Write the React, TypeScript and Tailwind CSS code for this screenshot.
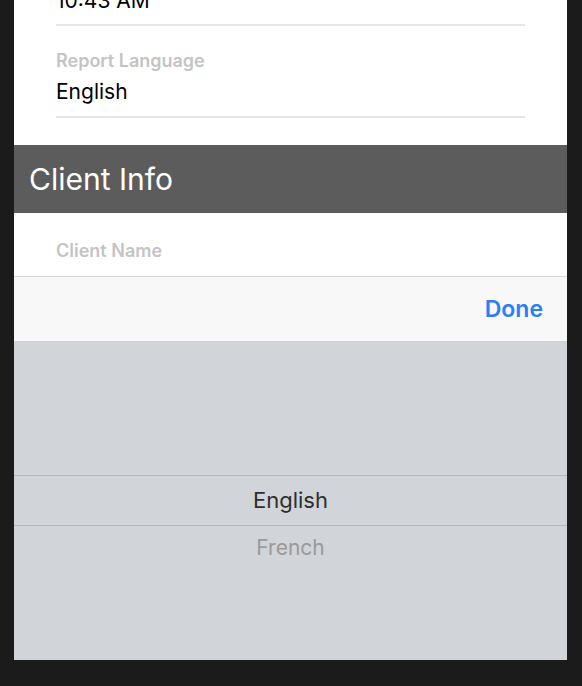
export default function App() {
  return (
    <div
      className="w-[582px] h-[686px] bg-[#1b1b1b] px-[14px] overflow-hidden"
      style={{ fontFamily: "Inter, 'Noto Sans', sans-serif" }}
    >
      <div className="flex flex-col h-[660px] w-[553px] overflow-hidden">
        {/* form (scrolled) */}
        <div className="bg-white flex flex-col px-[42px] h-[145px] shrink-0 overflow-hidden">
          <div className="h-[26px] shrink-0 border-b-2 border-[#e6e6e6]">
            <div className="text-[21px] leading-none text-black -mt-[10px]">10:43 AM</div>
          </div>
          <div className="pt-[25px] text-[18px] font-semibold text-[#c4c4c4] leading-[20px]">
            Report Language
          </div>
          <div className="pt-[9px] pb-[12px] text-[21px] text-black leading-[24px] border-b-2 border-[#e6e6e6]">
            English
          </div>
        </div>
        <div className="bg-[#5c5c5c] h-[68px] shrink-0 flex items-center px-[15px]">
          <span className="text-white text-[30px] leading-none">Client Info</span>
        </div>
        <div className="bg-white h-[63px] shrink-0 px-[42px] flex items-center">
          <span className="text-[18px] font-semibold text-[#c4c4c4] mt-[12px]">Client Name</span>
        </div>
        {/* toolbar */}
        <div className="bg-[#f8f8f8] h-[65px] shrink-0 border-t border-[#d6d6d6] flex items-center justify-end pr-[24px]">
          <span className="text-[#2b7ef5] text-[23px] font-semibold">Done</span>
        </div>
        {/* picker */}
        <div className="bg-[#d1d4d9] flex-1 flex flex-col">
          <div className="h-[134px]" />
          <div className="h-[51px] border-y border-[#b4b7bc] flex items-center justify-center">
            <span className="text-[22px] text-[#2e2e2e]">English</span>
          </div>
          <div className="h-[44px] flex items-center justify-center">
            <span className="text-[21px] text-[#9a9a9a]">French</span>
          </div>
        </div>
      </div>
    </div>
  );
}
